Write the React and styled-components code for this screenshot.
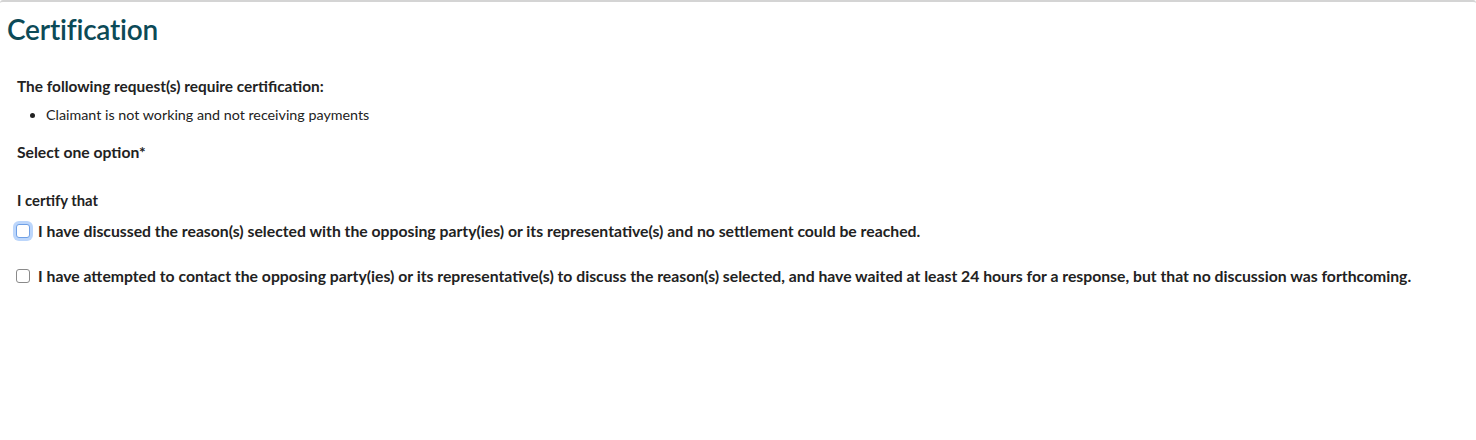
import React, { useState } from "react";
import styled, { createGlobalStyle } from "styled-components";

const GlobalStyle = createGlobalStyle`
  html, body {
    margin: 0;
    padding: 0;
    background: #ffffff;
  }
  body {
    font-family: "Lato", "Open Sans", sans-serif;
    color: #1f1f1f;
  }
`;

const options = [
  "I have discussed the reason(s) selected with the opposing party(ies) or its representative(s) and no settlement could be reached.",
  "I have attempted to contact the opposing party(ies) or its representative(s) to discuss the reason(s) selected, and have waited at least 24 hours for a response, but that no discussion was forthcoming.",
];

const App = () => {
  const [checked, setChecked] = useState([false, false]);

  const toggle = (i) => {
    setChecked(checked.map((c, j) => (j === i ? !c : c)));
  };

  return (
    <>
      <GlobalStyle />
      <Panel>
        <Title>Certification</Title>
        <Body>
          <Lead>The following request(s) require certification:</Lead>
          <Requests>
            <li>Claimant is not working and not receiving payments</li>
          </Requests>
          <Prompt>Select one option*</Prompt>
          <Certify>I certify that</Certify>
          <OptionList>
            {options.map((text, i) => (
              <Option key={i}>
                <Check
                  type="checkbox"
                  checked={checked[i]}
                  onChange={() => toggle(i)}
                  $focused={i === 0}
                />
                <span>{text}</span>
              </Option>
            ))}
          </OptionList>
        </Body>
      </Panel>
    </>
  );
};

export default App;

const Panel = styled.div`
  height: 440px;
  box-sizing: border-box;
  border-top: 2px solid #d4d4d4;
  border-radius: 3px 3px 0 0;
  padding: 11px 7px 0;
`;

const Title = styled.h1`
  margin: 0;
  font-size: 28px;
  font-weight: 600;
  line-height: 32px;
  color: #0c4a57;
  letter-spacing: -0.2px;
`;

const Body = styled.div`
  padding: 0 10px;
`;

const Lead = styled.p`
  margin: 31px 0 0;
  font-size: 15.4px;
  font-weight: 700;
  line-height: 20px;
  color: #222;
`;

const Requests = styled.ul`
  margin: 10px 0 0;
  padding-left: 29px;
  font-size: 14.3px;
  line-height: 18px;
  color: #222;
`;

const Prompt = styled.p`
  margin: 18px 0 0;
  font-size: 15.7px;
  font-weight: 700;
  line-height: 20px;
  color: #222;
`;

const Certify = styled.p`
  margin: 28px 0 0;
  font-size: 14.8px;
  font-weight: 700;
  line-height: 20px;
  color: #222;
`;

const OptionList = styled.div`
  display: flex;
  flex-direction: column;
  gap: 25px;
  margin-top: 11px;
`;

const Option = styled.label`
  display: flex;
  align-items: center;
  gap: 8px;
  font-size: 15.75px;
  font-weight: 700;
  line-height: 20px;
  color: #222;
  cursor: pointer;
`;

const Check = styled.input`
  appearance: none;
  margin: 0 0 0 -1px;
  width: 14px;
  height: 14px;
  flex: none;
  border-radius: 3px;
  border: 1px solid ${(p) => (p.$focused ? "#6fa0e6" : "#8a8a8a")};
  background: #fff;
  box-shadow: ${(p) => (p.$focused ? "0 0 0 3px #bcd6fb" : "none")};
  cursor: pointer;

  &:checked {
    background: #0c4a57;
    border-color: #0c4a57;
  }
`;
